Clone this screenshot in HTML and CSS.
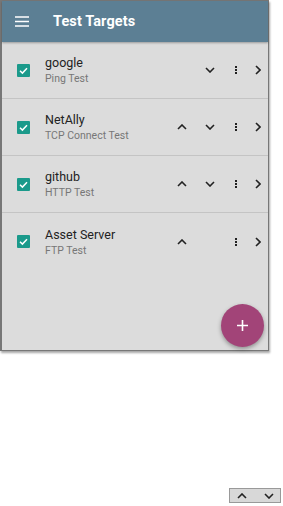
FILE: index.html
```html
<!DOCTYPE html>
<html lang="en">
<head>
    <meta charset="UTF-8">
    <title>Test Targets</title>
    <link rel="stylesheet" href="styles.css">
</head>
<body>

    <div class="phone">
        <div class="app-bar">
            <span class="menu">
                <svg width="14" height="11" viewBox="0 0 14 11"><path d="M0 1h14M0 5.5h14M0 10h14" stroke="#fff" stroke-width="1.6"/></svg>
            </span>
            <h1>Test Targets</h1>
        </div>

        <div class="list">
            <div class="row">
                <span class="check"><svg viewBox="0 0 13 13"><path d="M3 6.8l2.4 2.3L10 4.3" fill="none" stroke="#fff" stroke-width="1.5"/></svg></span>
                <div class="info">
                    <div class="name">google</div>
                    <div class="type">Ping Test</div>
                </div>
                <span class="ic"></span>
                <span class="ic"><svg viewBox="0 0 10 6"><path d="M1 1l4 4 4-4" fill="none" stroke="#222" stroke-width="1.6"/></svg></span>
                <span class="ic dots"><i></i><i></i><i></i></span>
                <span class="ic go"><svg viewBox="0 0 6 10"><path d="M1 1l4 4-4 4" fill="none" stroke="#222" stroke-width="1.6"/></svg></span>
            </div>
            <div class="row">
                <span class="check"><svg viewBox="0 0 13 13"><path d="M3 6.8l2.4 2.3L10 4.3" fill="none" stroke="#fff" stroke-width="1.5"/></svg></span>
                <div class="info">
                    <div class="name">NetAlly</div>
                    <div class="type">TCP Connect Test</div>
                </div>
                <span class="ic"><svg viewBox="0 0 10 6"><path d="M1 5l4-4 4 4" fill="none" stroke="#222" stroke-width="1.6"/></svg></span>
                <span class="ic"><svg viewBox="0 0 10 6"><path d="M1 1l4 4 4-4" fill="none" stroke="#222" stroke-width="1.6"/></svg></span>
                <span class="ic dots"><i></i><i></i><i></i></span>
                <span class="ic go"><svg viewBox="0 0 6 10"><path d="M1 1l4 4-4 4" fill="none" stroke="#222" stroke-width="1.6"/></svg></span>
            </div>
            <div class="row">
                <span class="check"><svg viewBox="0 0 13 13"><path d="M3 6.8l2.4 2.3L10 4.3" fill="none" stroke="#fff" stroke-width="1.5"/></svg></span>
                <div class="info">
                    <div class="name">github</div>
                    <div class="type">HTTP Test</div>
                </div>
                <span class="ic"><svg viewBox="0 0 10 6"><path d="M1 5l4-4 4 4" fill="none" stroke="#222" stroke-width="1.6"/></svg></span>
                <span class="ic"><svg viewBox="0 0 10 6"><path d="M1 1l4 4 4-4" fill="none" stroke="#222" stroke-width="1.6"/></svg></span>
                <span class="ic dots"><i></i><i></i><i></i></span>
                <span class="ic go"><svg viewBox="0 0 6 10"><path d="M1 1l4 4-4 4" fill="none" stroke="#222" stroke-width="1.6"/></svg></span>
            </div>
            <div class="row last">
                <span class="check"><svg viewBox="0 0 13 13"><path d="M3 6.8l2.4 2.3L10 4.3" fill="none" stroke="#fff" stroke-width="1.5"/></svg></span>
                <div class="info">
                    <div class="name">Asset Server</div>
                    <div class="type">FTP Test</div>
                </div>
                <span class="ic"><svg viewBox="0 0 10 6"><path d="M1 5l4-4 4 4" fill="none" stroke="#222" stroke-width="1.6"/></svg></span>
                <span class="ic"></span>
                <span class="ic dots"><i></i><i></i><i></i></span>
                <span class="ic go"><svg viewBox="0 0 6 10"><path d="M1 1l4 4-4 4" fill="none" stroke="#222" stroke-width="1.6"/></svg></span>
            </div>
        </div>

        <button class="fab">
            <svg width="11" height="11" viewBox="0 0 11 11"><path d="M5.5 0v11M0 5.5h11" stroke="#fff" stroke-width="1.6"/></svg>
        </button>
    </div>

    <div class="legend">
        <div class="arrows">
            <svg viewBox="0 0 10 6"><path d="M1 5l4-4 4 4" fill="none" stroke="#222" stroke-width="1.6"/></svg>
            <svg viewBox="0 0 10 6"><path d="M1 1l4 4 4-4" fill="none" stroke="#222" stroke-width="1.6"/></svg>
        </div>
    </div>

</body>
</html>
```

FILE: styles.css
```css
body { margin: 0; background: #fff; font-family: Roboto, "Noto Sans", sans-serif; width: 283px; height: 506px; overflow: hidden; }
.phone { position: relative; width: 266px; height: 349px; background: #dcdcdc; border: 1px solid #777; border-left-width: 2px; box-shadow: 1px 2px 2px rgba(0,0,0,0.35); }
.app-bar { height: 41px; background: #5c7f94; display: flex; align-items: center; box-shadow: 0 1px 2px rgba(0,0,0,0.3); }
.menu { width: 14px; margin-left: 13px; margin-right: 24px; display: flex; }
.app-bar h1 { margin: 0; color: #fff; font-size: 14.5px; font-weight: 700; letter-spacing: 0.1px; }
.list { display: flex; flex-direction: column; }
.row { height: 57px; box-sizing: border-box; display: flex; align-items: center; border-bottom: 1px solid #c4c4c4; }
.row.last { border-bottom: none; }
.check { width: 13px; height: 13px; background: #1b9a8b; border-radius: 1px; margin-left: 15px; margin-right: 15px; display: flex; }
.check svg { width: 13px; height: 13px; }
.info { flex: 1; padding-top: 1px; }
.name { font-size: 12.5px; color: #222; line-height: 16px; }
.type { font-size: 10.5px; color: #777; line-height: 15px; }
.ic { width: 28px; display: flex; justify-content: center; align-items: center; }
.ic svg { width: 10px; height: 6px; }
.ic.dots { width: 24px; }
.ic.go { width: 20px; }
.ic.go svg { width: 6px; height: 10px; }
.dots { flex-direction: column; gap: 1px; }
.dots i { width: 2px; height: 2px; background: #222; display: block; }
.fab { position: absolute; left: 219px; top: 303px; width: 43px; height: 43px; border-radius: 50%; border: none; background: #a24478; box-shadow: 0 2px 4px rgba(0,0,0,0.35); display: flex; align-items: center; justify-content: center; padding: 0; }
.legend { display: flex; justify-content: flex-end; padding: 137px 2px 0 0; }
.arrows { width: 52px; height: 15px; background: #d8d8d8; border: 1px solid #999; display: flex; align-items: center; justify-content: space-between; padding: 0 6px 0 7px; box-sizing: border-box; }
.arrows svg { width: 10px; height: 6px; }
```
